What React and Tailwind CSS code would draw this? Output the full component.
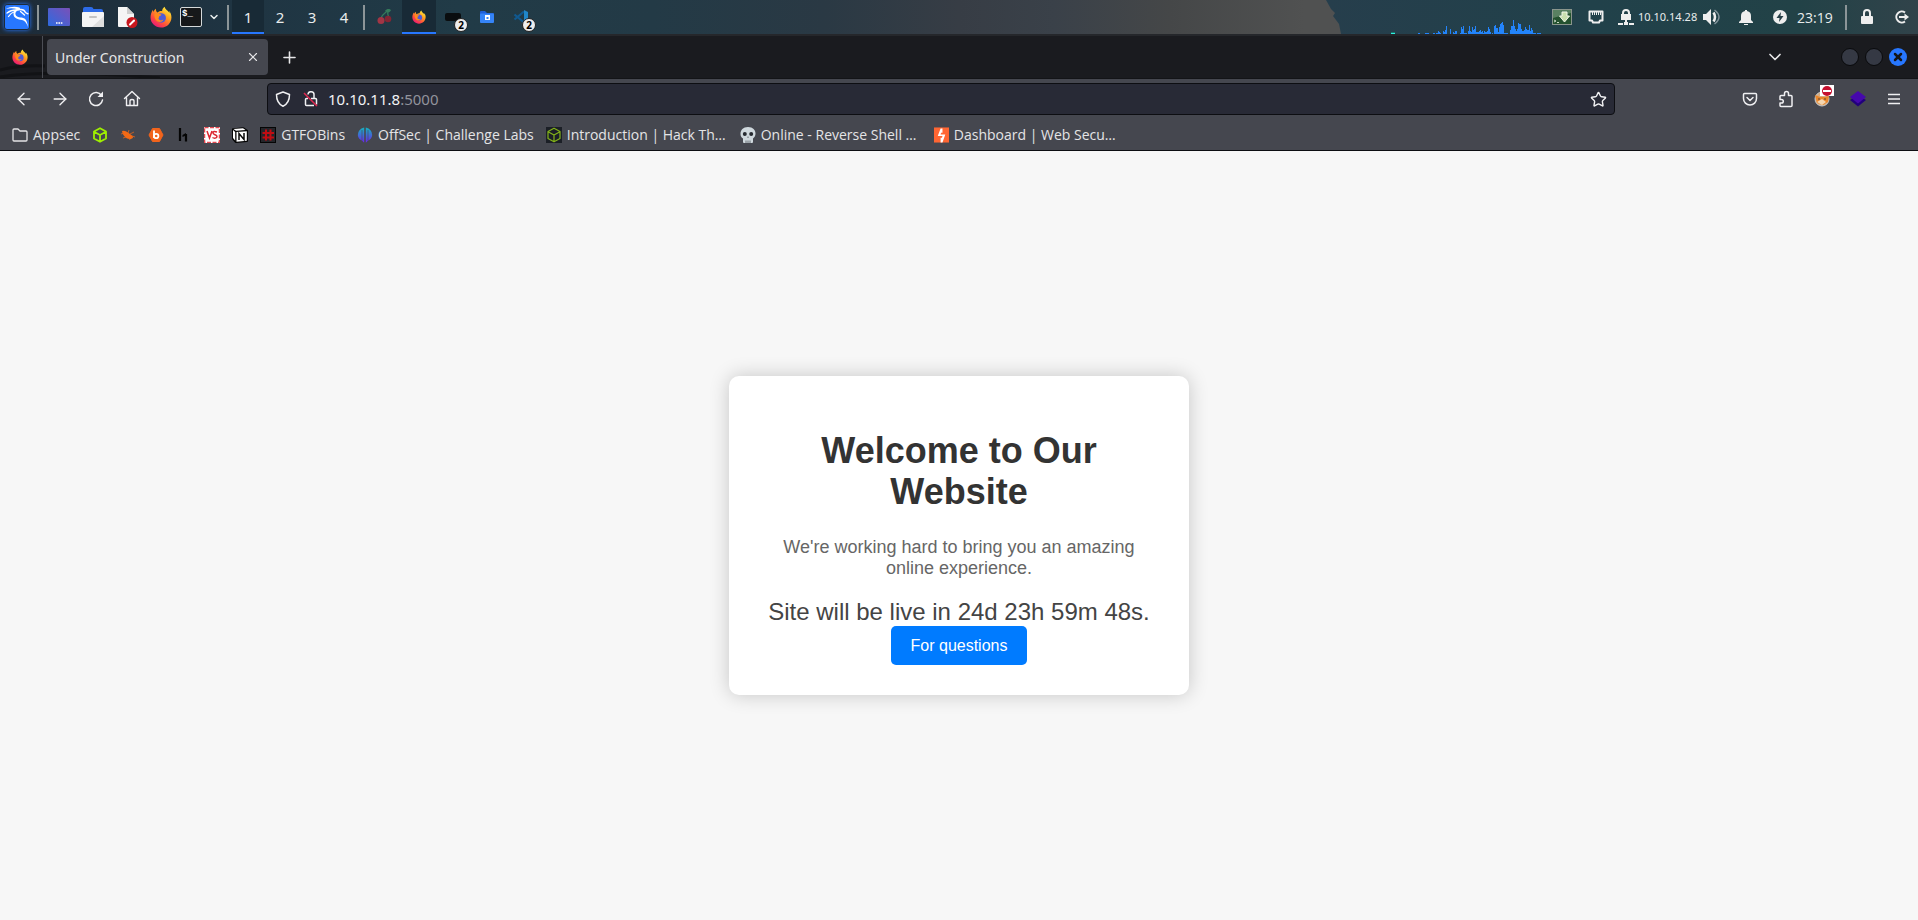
import React from "react";
import { ArrowLeft, ArrowRight, ChevronDown, Plus, Star, X } from "lucide-react";

function Firefox({ className = "size-4" }) {
  return (
    <svg viewBox="0 0 24 24" className={className} aria-hidden="true">
      <defs>
        <linearGradient id="ff-body" x1="0.8" y1="0.1" x2="0.2" y2="0.95">
          <stop offset="0" stopColor="#ffe43a" />
          <stop offset="0.35" stopColor="#ff9a1f" />
          <stop offset="0.7" stopColor="#ff4a3f" />
          <stop offset="1" stopColor="#e8187a" />
        </linearGradient>
      </defs>
      <path fill="url(#ff-body)" d="M16 .8c-1.900 1.300-2.800 3.200-2.800 4.800-2.300-.2-4 .5-5 1.600C7 6.500 6.300 4.900 6.500 3 4.900 4 4.200 5.300 4 6.500 3.400 5.900 3.100 5 3.200 4.200 1.500 6.500.6 9.700.6 12.600.6 18.600 5.600 23.500 12 23.500s11.400-4.900 11.400-11.300c0-3-1.200-5.700-2.700-7.100.4 1 .6 1.900.6 2.700C20 4.700 16.800 4.500 16 .8z" />
      <circle cx="12.200" cy="13" r="5.200" fill="#4f5bd8" />
      <path fill="#ff8a1c" d="M5 8.500c1.700-.9 3.300-.7 4.700.3 1 .1 2.700.1 2.700.8-.2.9-1.700 1.200-2.300 1.700-.3.6 0 1.500-.9 1.900 0 2.500 3.200 3.300 5.500 1.600-1.300 3.400-6.500 3.700-8.300.6C5 13 4.400 10.500 5 8.500z" />
    </svg>
  );
}

function Kali() {
  return (
    <svg viewBox="0 0 26 26" className="size-[26px]" aria-hidden="true">
      <rect x="1" y="1" width="24" height="24" rx="2" fill="#2777ff" />
      <path fill="#fff" d="M2 5c4-2.500 9-3 13.500-1.500L17 6c-4 0-6 2-5.500 4.500.6 2.500 4 2.800 7 3.300 3.800.8 5 4.500 5.500 9.200-1.500-4-3-6.300-6-7-4-.8-8-1.300-8.500-5.500C9.300 8 10.500 6 12.500 5 9 4 5.500 4.200 2 5z" />
      <g fill="none" stroke="#fff" strokeLinecap="round">
        <path strokeWidth="1.300" d="M14 6c3.500-1 6.500 0 7.500 2.500l2.500 1.300M16.500 7.500l4 3.500M3 9c2.500-2 5.500-3 9-3M4.500 12.500c1.500-2.500 3.500-4 6.500-5" />
      </g>
    </svg>
  );
}

const DesktopIcon = () => (
  <svg viewBox="0 0 22 18" className="h-[18px] w-[22px]" aria-hidden="true">
    <defs>
      <linearGradient id="desk" x1="0" y1="1" x2="1" y2="0">
        <stop offset="0" stopColor="#2d6be0" />
        <stop offset="1" stopColor="#7a50b8" />
      </linearGradient>
    </defs>
    <rect width="22" height="18" rx="1" fill="url(#desk)" />
    <path stroke="#fff" strokeWidth="1.500" strokeDasharray="1.600 .8" d="M8 15h6.500" />
  </svg>
);

const FilesIcon = () => (
  <svg viewBox="0 0 22 20" className="h-5 w-[22px]" aria-hidden="true">
    <path fill="#2d6be8" d="M1 6V2q0-2 2-2h6q2 0 2.500 2H19q2 0 2 2v3z" />
    <rect y="5" width="22" height="15" rx="1" fill="#f4f4f4" />
    <path fill="#dedede" d="M22 9v11H10z" />
    <path stroke="#c3c3c3" strokeWidth="2" strokeLinecap="round" d="M8 10h6" />
  </svg>
);

const EditorIcon = () => (
  <svg viewBox="0 0 22 22" className="size-[22px]" aria-hidden="true">
    <path fill="#f5f5f5" d="M2 1h9l7 7v12q0 1-1 1H3q-1 0-1-1z" />
    <path fill="#cfcfcf" d="M11 1l7 7h-7z" />
    <circle cx="16" cy="16.500" r="5.500" fill="#c8171e" />
    <path stroke="#fff" strokeWidth="2" strokeLinecap="round" d="M14 18.500l4-4" />
  </svg>
);

const TerminalIcon = () => (
  <span className="flex h-5 w-[22px] items-start rounded-xs border border-[#d5d9da] bg-[#16181a] px-px font-['Liberation_Mono',monospace] text-[9px] leading-3 font-bold text-white">$_</span>
);

const Cherry = () => (
  <svg viewBox="0 0 16 16" className="size-4" aria-hidden="true">
    <path fill="none" stroke="#347b5b" strokeWidth="1.300" d="M4 9c1-4 5-5 7-8-1 4 0 6 1 8" />
    <path fill="#347b5b" d="M8 2c2-3 5-2 6-1-1 3-4 3-6 1z" />
    <circle cx="4" cy="11.500" r="3.500" fill="#a23545" />
    <circle cx="11" cy="10" r="3.300" fill="#842533" />
  </svg>
);

const BlueFolder = () => (
  <svg viewBox="0 0 14 12" className="h-3 w-3.5" aria-hidden="true">
    <path fill="#1f5fd6" d="M0 2V1q0-1 1-1h4l2 2h6q1 0 1 1v2H0z" />
    <rect y="2.500" width="14" height="9.500" rx="1" fill="#3584f7" />
    <rect x="5" y="4" width="5" height="5" fill="#fff" />
    <rect x="6.500" y="6" width="2" height="2" fill="#3584f7" />
  </svg>
);

const CodeIcon = () => (
  <svg viewBox="0 0 16 16" className="size-4" aria-hidden="true">
    <path fill="none" stroke="#11598f" strokeWidth="2.200" strokeLinejoin="round" d="M1.500 5.500L11 13.500M1.500 10.500L11 2.500" />
    <path fill="#1f86c9" d="M11 1l4 2v10l-4 2z" />
  </svg>
);

function Count() {
  return <span className="absolute top-[18px] left-[18px] flex size-3.5 items-center justify-center rounded-full border border-[#222] bg-[#ededed] text-[10px] font-bold text-black">2</span>;
}

function Bar() {
  return <span className="h-[25px] w-0.5 bg-[#8c9598]" />;
}

const cpu = [1,1,0,0,0,0,0,1,1,1,1,0,0,0,0,1,1,0,1,1,3,2,1,0,0,3,2,4,8,0,0,0,5,0,0,2,1,3,3,0,0,0,1,7,5,8,1,1,1,0,3,8,3,2,7,4,5,8,2,2,2,3,4,2,3,1,3,2,2,3,7,5,2,0,1,0,8,9,6,6,2,7,10,11,12,9,1,1,1,1,0,0,4,8,8,14,8,5,3,5,11,10,10,5,3,3,4,7,5,4,4,9,3,6,4,1,1,1,0,1,1,1,1];

function CpuGraph() {
  return (
    <svg viewBox="0 0 152 15" className="h-[15px] w-[152px] self-end" shapeRendering="crispEdges" aria-hidden="true">
      <rect x="0" y="13" width="4" height="1" fill="#17766f" />
      <rect x="0" y="14" width="4" height="1" fill="#2ff0dd" />
      {cpu.map((h, i) => <rect key={i} x={27 + i} y={15 - h} width="1" height={h} fill="#2384fb" />)}
    </svg>
  );
}

function Panel() {
  return (
    <header className="relative flex h-[34px] shrink-0 items-center justify-between bg-[linear-gradient(90deg,#1d2b38_0%,#1f3442_12%,#213b47_24%,#233a46_34%,#2a3944_43%,#373d45_50%,#3a4149_55%,#454748_61%,#505151_68%,#505151_100%)] text-[#e8ecec]">
      <svg className="absolute top-0 right-0 h-full w-[594px]" viewBox="0 0 594 34" preserveAspectRatio="none" aria-hidden="true">
        <defs>
          <linearGradient id="sea">
            <stop offset="0" stopColor="#263e4c" />
            <stop offset="0.45" stopColor="#21414a" />
            <stop offset="0.8" stopColor="#224247" />
            <stop offset="1" stopColor="#31434a" />
          </linearGradient>
        </defs>
        <path fill="url(#sea)" d="M2 0l5 9 4 4-2 3 6 8 2 10h577V0z" />
      </svg>
      <nav className="relative flex h-full items-center" aria-label="Launchers">
        <div className="flex h-full items-center pl-1">
          <button aria-label="Applications" className="mr-[7px] rounded shadow-[0_0_4px_#2777ff]"><Kali /></button>
          <Bar />
          <div className="ml-[9px] flex items-center gap-3">
            <button aria-label="Desktop"><DesktopIcon /></button>
            <button aria-label="Files"><FilesIcon /></button>
            <button aria-label="Editor"><EditorIcon /></button>
            <button aria-label="Firefox"><Firefox className="size-[22px]" /></button>
          </div>
          <button aria-label="Terminal" className="ml-2"><TerminalIcon /></button>
          <button aria-label="More terminals" className="mx-1.5"><ChevronDown size={12} strokeWidth={3} /></button>
          <span className="w-px" />
          <Bar />
        </div>
        <div className="ml-[3px] flex h-full text-[15px]">
          {["1", "2", "3", "4"].map((n) => (
            <button key={n} className={n === "1" ? "w-8 border-b-2 border-[#2777ff] bg-[#182a36] pt-0.5" : "w-8"}>{n}</button>
          ))}
        </div>
        <span className="w-[3px]" />
        <Bar />
        <div className="ml-[3px] flex h-full">
          <button aria-label="CherryTree" className="flex w-[34px] items-center justify-center"><Cherry /></button>
          <button aria-label="Under Construction" className="flex w-[34px] items-center justify-center border-b-2 border-[#2777ff] bg-[#182a36] pt-0.5"><Firefox className="size-3.5" /></button>
          <button aria-label="Terminals" className="relative flex w-[34px] items-center justify-center">
            <span className="h-2 w-4 rounded-xs bg-[#0a0d0f]" /><Count />
          </button>
          <button aria-label="Folder" className="flex w-[34px] items-center justify-center"><BlueFolder /></button>
          <button aria-label="Code" className="relative flex w-[34px] items-center justify-center">
            <CodeIcon /><Count />
          </button>
        </div>
      </nav>
      <div className="relative flex h-full items-center pr-2">
        <CpuGraph />
        <svg viewBox="0 0 20 16" className="ml-[9px] h-4 w-5" aria-hidden="true">
          <rect x=".5" y=".5" width="19" height="15" fill="#24522f" stroke="#8a958c" />
          <path fill="#7da184" d="M1 1h18v3L1 9z" opacity=".6" />
          <path fill="#c9dfae" stroke="#f2f8ea" d="M10 3h5v4h2.500l-5 6-5-6H10z" />
          <path stroke="#c7d6c4" fill="none" d="M2 11l2 1-2 1M5 13.500h2" />
        </svg>
        <svg viewBox="0 0 16 14" className="ml-4 h-3.5 w-4" fill="none" stroke="#eee" aria-hidden="true">
          <path strokeWidth="2" strokeLinejoin="round" d="M1.500 1.500h13v9H12L11 12.500H5L4 10.500H1.500z" />
          <path strokeWidth="1" d="M4.500 2v3M6.500 2v3M8.500 2v3M10.500 2v3M12.500 2v3" />
        </svg>
        <svg viewBox="0 0 16 16" className="ml-3.5 size-4" aria-hidden="true">
          <path fill="none" stroke="#eee" strokeWidth="2" d="M5 6V4a3 3 0 016 0v2" />
          <path fill="#eee" d="M3 5h10v6H3zM7 11h2v2H7zM0 14h5v2H0zM11 14h5v2h-5zM6 13h4v3H6z" />
        </svg>
        <span className="ml-1 w-[60px] text-[11px]">10.10.14.28</span>
        <svg viewBox="0 0 18 16" className="ml-[5px] h-4 w-[18px]" aria-hidden="true">
          <path fill="#eee" d="M0 5h3l5-5v16l-5-5H0z" />
          <path fill="none" stroke="#eee" strokeWidth="2.500" d="M10.500 3.500q3 4.500 0 9" />
          <path fill="none" stroke="#81939a" strokeWidth="1.500" d="M11.500 1q9 7 0 14" />
        </svg>
        <svg viewBox="0 0 14 15" className="ml-[18px] h-[15px] w-3.5" fill="#eee" aria-hidden="true">
          <path d="M6 0h2v1c3 .5 4 2.500 4 5v4l2 2v1H0v-1l2-2V6c0-2.500 1-4.500 4-5zM5 14h4v1H5z" />
        </svg>
        <svg viewBox="0 0 14 14" className="ml-5 size-3.5" aria-hidden="true">
          <circle cx="7" cy="7" r="7" fill="#eee" />
          <path fill="#263f47" d="M8 2L3.500 8H6.500L6 12l4.500-6H7.500z" />
        </svg>
        <time className="ml-2.5 w-12 font-['Open_Sans',sans-serif] text-[14px]">23:19</time>
        <Bar />
        <svg viewBox="0 0 14 16" className="ml-[13px] h-4 w-3.5" aria-hidden="true">
          <path fill="none" stroke="#eee" strokeWidth="2" d="M4 8V4a3 3 0 016 0v4" />
          <rect x="1" y="7" width="12" height="8" rx="1" fill="#eee" />
        </svg>
        <svg viewBox="0 0 16 14" className="ml-5 h-3.5 w-4" aria-hidden="true">
          <path fill="none" stroke="#eee" strokeWidth="2" d="M11 2.500A5.500 5.500 0 1011 11.500M5 7h6" />
          <path fill="#eee" d="M10.500 3.500L15 7l-4.500 3.500z" />
        </svg>
      </div>
    </header>
  );
}

function TitleBar() {
  return (
    <div className="relative flex h-[45px] shrink-0 items-center border-t-2 border-b border-t-[#25272b] border-b-[#131417] bg-[#1a1b1f] text-[#e6e6e8]">
      <svg viewBox="0 0 160 42" className="absolute bottom-0 left-0 h-[42px] w-40" fill="none" stroke="#121316" strokeWidth="3" aria-hidden="true">
        <path d="M0 34Q20 29 45 30M0 41Q50 33 160 42" />
      </svg>
      <button aria-label="Firefox View" className="relative flex h-full w-[43px] items-center border-r border-[#4c4e55] pl-3"><Firefox /></button>
      <div className="relative ml-1 flex h-9 w-[221px] items-center justify-between rounded bg-[#45474f] pr-2 pl-2">
        <span className="text-[14px]">Under Construction</span>
        <button aria-label="Close tab"><X size={14} strokeWidth={2} /></button>
      </div>
      <button aria-label="New tab" className="ml-3"><Plus size={19} strokeWidth={2} /></button>
      <button aria-label="List all tabs" className="mr-14 ml-auto"><ChevronDown size={20} strokeWidth={2} /></button>
      <div className="mr-[11px] flex gap-1.5">
        <button aria-label="Minimize" className="size-[18px] rounded-full border border-[#090a0c] bg-[#353944]" />
        <button aria-label="Maximize" className="size-[18px] rounded-full border border-[#090a0c] bg-[#353944]" />
        <button aria-label="Close" className="flex size-[18px] items-center justify-center rounded-full bg-[#2777ff] text-[#15161a]"><X size={12} strokeWidth={5} /></button>
      </div>
    </div>
  );
}

function Toolbar() {
  return (
    <div className="flex h-10 items-center">
      <div className="flex w-[267px] items-center gap-4 pl-3.5">
        <button aria-label="Back"><ArrowLeft size={20} strokeWidth={1.6} /></button>
        <button aria-label="Forward"><ArrowRight size={20} strokeWidth={1.6} /></button>
        <button aria-label="Reload">
          <svg viewBox="0 0 20 20" className="size-5" aria-hidden="true">
            <path fill="none" stroke="currentColor" strokeWidth="1.500" strokeLinecap="round" d="M15.500 6.500A6.500 6.500 0 1016.500 11" />
            <path fill="currentColor" d="M17 2.500V8h-5.500z" />
          </svg>
        </button>
        <button aria-label="Home">
          <svg viewBox="0 0 20 20" className="size-5" fill="none" stroke="currentColor" strokeWidth="1.400" strokeLinecap="round" strokeLinejoin="round" aria-hidden="true">
            <path d="M2.500 9.500L10 2.500l7.500 7M4.500 8.500v8h11v-8M8 16v-4q0-1.500 2-1.500t2 1.500v4" />
          </svg>
        </button>
      </div>
      <div className="relative flex h-8 min-w-0 flex-1 items-center rounded border border-[#0d0e12] bg-[#282a36] px-[7px]">
        <svg viewBox="0 0 16 16" className="size-4 shrink-0" fill="none" stroke="currentColor" strokeWidth="1.500" strokeLinejoin="round" aria-hidden="true">
          <path d="M8 1l6.500 2.500C14.500 9 13 13 8 15.200 3 13 1.500 9 1.500 3.500z" />
        </svg>
        <svg viewBox="0 0 16 16" className="ml-3 size-4 shrink-0" fill="none" stroke="currentColor" strokeWidth="1.500" aria-hidden="true">
          <path d="M5 3.500a3 3 0 016 .5v3M8 7.500h4.500q1 0 1 1v5M11 14.500H3.500q-1 0-1-1v-5q0-1 1-1H5" />
          <path stroke="#e22850" d="M1 2l13 13" />
        </svg>
        <input aria-label="Address" defaultValue="10.10.11.8:5000" className="ml-2.5 min-w-0 flex-1 bg-transparent text-[15px] text-transparent outline-none" />
        <span className="pointer-events-none absolute left-[60px] text-[15px] text-[#f2f2f4]" aria-hidden="true">10.10.11.8<span className="text-[#92939c]">:5000</span></span>
        <button aria-label="Bookmark this page"><Star size={17} strokeWidth={2} /></button>
      </div>
      <div className="flex w-[303px] items-center justify-end gap-4 pr-3.5">
        <button aria-label="Pocket">
          <svg viewBox="0 0 20 20" className="size-5" fill="none" stroke="currentColor" strokeWidth="1.500" strokeLinecap="round" strokeLinejoin="round" aria-hidden="true">
            <path d="M4.500 4.500h11q1 0 1 1v4a6.500 6.500 0 01-13 0v-4q0-1 1-1zM7 8.500l3 3 3-3" />
          </svg>
        </button>
        <button aria-label="Extensions">
          <svg viewBox="0 0 20 20" className="size-5" fill="none" stroke="currentColor" strokeWidth="1.500" strokeLinejoin="round" aria-hidden="true">
            <path d="M8.500 6.500V4.500a2 2 0 014 0v2H15q1 0 1 1v9q0 1-1 1H5q-1 0-1-1v-2.500h1.500a1.800 1.800 0 000-3.600H4V7.500q0-1 1-1z" />
          </svg>
        </button>
        <button aria-label="FoxyProxy" className="relative">
          <svg viewBox="0 0 20 20" className="size-5" aria-hidden="true">
            <circle cx="10" cy="10" r="7" fill="#d7ad83" stroke="#c4c8cb" />
            <path fill="#e9872c" d="M3 6l5 2h5l4-1-1 6-5 3-6-2z" />
            <path fill="#f4d6b0" d="M5 13l5-3 4 3-4 3z" />
            <path stroke="#61432d" d="M6 10h2M12 10h2" />
          </svg>
          <span className="absolute -top-1 left-2 flex h-[11px] w-3.5 items-center justify-center bg-white">
            <span className="flex h-2.5 w-2.5 items-center justify-center rounded-full bg-[#c5102f]"><span className="h-0.5 w-2 bg-white" /></span>
          </span>
        </button>
        <button aria-label="Wappalyzer">
          <svg viewBox="0 0 20 20" className="size-5" aria-hidden="true">
            <path fill="#22007c" d="M2 11l8-5 8 5-8 6.500z" />
            <path fill="#4608ad" d="M2 8l8-6 8 6-8 6.500z" />
          </svg>
        </button>
        <button aria-label="Menu">
          <svg viewBox="0 0 20 20" className="size-5" stroke="currentColor" strokeWidth="1.400" aria-hidden="true"><path d="M4 5.500h12M4 10h12M4 14.500h12" /></svg>
        </button>
      </div>
    </div>
  );
}

const Cube = ({ bg, stroke, width = 1.8 }) => (
  <svg viewBox="0 0 16 16" className="size-4 shrink-0" aria-hidden="true">
    <rect width="16" height="16" fill={bg} />
    <path fill="none" stroke={stroke} strokeWidth={width} strokeLinejoin="round" d="M8 1.200l6 3.300v7L8 14.800l-6-3.300v-7zM2.500 5L8 8l5.500-3M8 8v6" />
  </svg>
);

const bookmarkIcons = {
  bug: (
    <svg viewBox="0 0 16 16" className="size-4" aria-hidden="true">
      <path fill="#f26a16" d="M2 4q3-1 6 1.500l4 3q2 2 0 3-4 1.500-7-1.500Q2 7.500 2 4z" />
      <path fill="none" stroke="#e2641a" strokeWidth=".8" d="M8 6l1-3M10 7l4-2M6 10l-3 1M12 9l3 1M9 11l1 2M4 6L1 7" />
    </svg>
  ),
  bugcrowd: (
    <svg viewBox="0 0 16 16" className="size-4" aria-hidden="true">
      <path fill="#f2641c" stroke="#f2641c" strokeLinejoin="round" d="M4.500 1.500h7L15 8l-3.500 6.500h-7L1 8z" />
      <path fill="none" stroke="#fff" strokeWidth="1.800" d="M6 3.500V11" />
      <circle cx="8.200" cy="9" r="2.200" fill="none" stroke="#fff" strokeWidth="1.800" />
    </svg>
  ),
  hacker: (
    <svg viewBox="0 0 16 16" className="size-4" aria-hidden="true">
      <path fill="none" stroke="#050505" strokeWidth="2.200" d="M4 1v13M10 14.500V7" />
      <path fill="#050505" d="M6.500 8L10 6v2.500l-3.500 1.500z" />
    </svg>
  ),
  vs: (
    <svg viewBox="0 0 16 16" className="size-4" aria-hidden="true">
      <rect width="16" height="16" fill="#fff" />
      <rect x=".5" y=".5" width="15" height="15" fill="none" stroke="#e5484f" strokeWidth="1.500" strokeDasharray="4 1.500" />
      <path fill="none" stroke="#dc2630" strokeWidth="1.500" d="M3 4l2.500 7L8 4M13 5q-4-1.500-4 1c0 2 4 1.500 4 3.500s-3 2-4.500 1" />
    </svg>
  ),
  notion: (
    <svg viewBox="0 0 16 16" className="size-4" aria-hidden="true">
      <path fill="#050505" d="M0 1.500L11 .3q1 0 2 1l3 2V14q0 1-1 1L4 16q-1 0-1.500-1L0 12z" />
      <path fill="#fff" d="M1.500 2l9.500-.8 2.500 1.700L4 3.800zM1 3l2.200 2v8.500L1 11zM4.500 5l10.300-.7v9.500l-10.300.9z" />
      <path fill="none" stroke="#080808" strokeWidth="1.500" d="M7 13V6.500l5 6V6" />
    </svg>
  ),
  gtfo: (
    <svg viewBox="0 0 16 16" className="size-4" aria-hidden="true">
      <rect x=".5" y=".5" width="15" height="15" fill="#24252a" stroke="#050505" />
      <path stroke="#c00d12" strokeWidth="2" d="M6 2.500v11M10.500 2.500v11M2.500 6h11.500M2.500 10.500h11.500" />
    </svg>
  ),
  offsec: (
    <svg viewBox="0 0 16 16" className="size-4" aria-hidden="true">
      <defs><linearGradient id="off" x1="0" y1="0" x2="0" y2="1"><stop stopColor="#14b4c0" /><stop offset="1" stopColor="#6a26e8" /></linearGradient></defs>
      <path fill="url(#off)" d="M7.200 .5v15q-1.400-.2-1.700-1.700Q1 12 .8 8 1 2 7.200.5zM8.800.5v15q1.400-.2 1.700-1.700Q15 12 15.200 8 15 2 8.800.5z" />
      <path stroke="#45474f" strokeWidth=".6" d="M5 3v10M11 3v10" />
    </svg>
  ),
  skull: (
    <svg viewBox="0 0 16 16" className="size-4" aria-hidden="true">
      <path fill="#cfd8dd" d="M8 0c5 0 7.500 3 7.500 6.500 0 2-1 4-2.500 5V15q0 1-1 1H4q-1 0-1-1v-3.500C1.500 10.500.5 9 .5 7 .5 3 3 0 8 0z" />
      <circle cx="4.800" cy="7" r="2" fill="#262a30" /><circle cx="11.200" cy="7" r="2" fill="#262a30" />
      <path stroke="#4a5058" strokeWidth=".8" d="M8 9.500v1.500M6 13.500V16M8 13.500V16M10 13.500V16" />
    </svg>
  ),
  burp: (
    <svg viewBox="0 0 16 16" className="size-4" aria-hidden="true"><rect width="16" height="16" fill="#ff6633" /><path fill="#fff" d="M7 1h2v4.500H7.500L7 7.500h5L9 16H7v-5h1.500L9 9H4z" /></svg>
  ),
};

function Bookmark({ icon, children, className = "" }) {
  return (
    <a href="#" className={"flex h-5 shrink-0 items-center gap-[5px] " + className}>
      {icon}
      <span className="whitespace-nowrap">{children}</span>
    </a>
  );
}

function Bookmarks() {
  return (
    <nav aria-label="Bookmarks" className="flex h-[31px] items-center gap-3 overflow-hidden pl-3 font-['Open_Sans',sans-serif] text-[14px] text-[#e4e4e6]">
      <Bookmark icon={
        <svg viewBox="0 0 16 16" className="size-4 shrink-0" fill="none" stroke="currentColor" strokeWidth="1.300" strokeLinejoin="round" aria-hidden="true">
          <path d="M1 3q0-1 1-1h4l2 2h6q1 0 1 1v8q0 1-1 1H2q-1 0-1-1z" />
        </svg>
      }>Appsec</Bookmark>
      <a href="#" aria-label="Hack The Box"><Cube bg="none" stroke="#9fef00" /></a>
      <a href="#" aria-label="Bug bounty">{bookmarkIcons.bug}</a>
      <a href="#" aria-label="Bugcrowd">{bookmarkIcons.bugcrowd}</a>
      <a href="#" aria-label="HackerOne">{bookmarkIcons.hacker}</a>
      <a href="#" aria-label="VS">{bookmarkIcons.vs}</a>
      <a href="#" aria-label="Notion">{bookmarkIcons.notion}</a>
      <Bookmark icon={bookmarkIcons.gtfo}>GTFOBins</Bookmark>
      <Bookmark icon={bookmarkIcons.offsec}>OffSec | Challenge Labs</Bookmark>
      <Bookmark className="w-[182px]" icon={<Cube bg="#1b1f26" stroke="#83b319" width={1.2} />}>Introduction | Hack Th…</Bookmark>
      <Bookmark className="w-[182px]" icon={bookmarkIcons.skull}>Online - Reverse Shell …</Bookmark>
      <Bookmark className="w-[182px]" icon={bookmarkIcons.burp}>Dashboard | Web Secu…</Bookmark>
    </nav>
  );
}

export default function App() {
  return (
    <div className="flex min-h-screen flex-col bg-[#f7f7f7] font-['Noto_Sans',sans-serif]">
      <Panel />
      <TitleBar />
      <div className="shrink-0 border-b border-[#0d0e12] bg-[#45474f] text-[#f0f0f2]">
        <Toolbar />
        <Bookmarks />
      </div>
      <main className="flex flex-1 items-center justify-center font-['Liberation_Sans',sans-serif]">
        <section className="w-full max-w-[460px] rounded-[10px] bg-white p-[30px] text-center shadow-[0_0_20px_rgba(0,0,0,0.2)]">
          <h1 className="mt-6 mb-[25px] text-4xl leading-[41px] font-bold text-[#333]">Welcome to Our Website</h1>
          <p className="mb-[19px] text-lg leading-[21px] text-[#666]">We're working hard to bring you an amazing online experience.</p>
          <p className="text-2xl leading-7 text-[#444]">Site will be live in 24d 23h 59m 48s.</p>
          <button className="mx-auto block rounded-[5px] bg-[#007bff] px-5 py-2.5 text-base leading-[19px] text-white">For questions</button>
        </section>
      </main>
    </div>
  );
}
